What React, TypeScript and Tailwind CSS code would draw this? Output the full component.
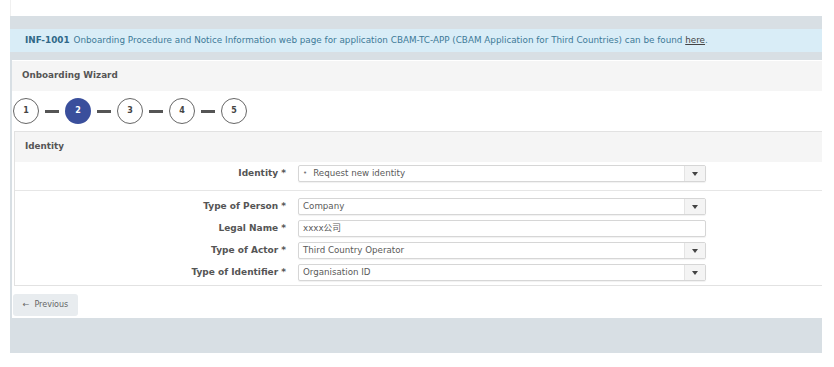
import React from "react";

const steps = [1, 2, 3, 4, 5];

const rows = [
  { label: "Type of Person", value: "Company", select: true },
  { label: "Legal Name", value: "xxxx公司", select: false },
  { label: "Type of Actor", value: "Third Country Operator", select: true },
  { label: "Type of Identifier", value: "Organisation ID", select: true },
];

function Field({ value, select, bullet }: { value: string; select: boolean; bullet?: boolean }) {
  return (
    <div className="w-[408px] h-[17px] flex items-stretch border border-[#d6d6d6] rounded-[2px] bg-white shadow-[0_1px_1px_rgba(0,0,0,0.06)]">
      <div className="flex-1 flex items-center pl-[4px] text-[8.7px] text-[#5a5a5a]">
        {bullet && <span className="mr-[6px] text-[7px] text-[#777]">•</span>}
        <span>{value}</span>
      </div>
      {select && (
        <div className="w-[21px] flex items-center justify-center bg-[#f4f4f4] border-l border-[#e4e4e4]">
          <svg width="6" height="4" viewBox="0 0 6 4">
            <path d="M0 0 L6 0 L3 4 Z" fill="#444" />
          </svg>
        </div>
      )}
    </div>
  );
}

function Row({ label, children }: { label: string; children: React.ReactNode }) {
  return (
    <div className="flex items-center gap-[12px]">
      <div className="w-[271px] text-right text-[9px] font-bold text-[#555]">{label} *</div>
      {children}
    </div>
  );
}

export default function App() {
  return (
    <div className="min-h-screen bg-white font-['DejaVu_Sans','Noto_Sans_CJK_SC',sans-serif]">
      <div className="ml-[10px] w-[812px]">
        <div className="h-4 border-l border-[#f0f0f0]" />
        <div className="bg-[#d8dfe4] pt-[13px] pb-[35px]">
          <div className="h-[23px] bg-[#d9edf7] flex items-center pl-[15px] text-[8.8px] text-[#3d7a98]">
            <span className="font-bold text-[#2f6888] mr-[4px]">INF-1001</span>
            <span>
              Onboarding Procedure and Notice Information web page for application CBAM-TC-APP (CBAM Application for Third Countries) can be found{" "}
              <span className="underline text-[#444]">here</span>.
            </span>
          </div>

          <div className="mt-[8px] ml-[2px] bg-white pt-px pb-[2px]">
            <div className="h-[30px] bg-[#f5f5f5] flex items-center pl-[10px] text-[8.8px] font-bold text-[#555]">
              Onboarding Wizard
            </div>

            <div className="mt-[7px] ml-px flex items-center gap-[6px]">
              {steps.map((s, i) => (
                <React.Fragment key={s}>
                  {i > 0 && <div className="w-[14px] h-[3px] bg-[#555]" />}
                  <div
                    className={
                      s === 2
                        ? "w-[26px] h-[26px] rounded-full bg-[#3a4f9c] text-white flex items-center justify-center text-[8px] font-bold"
                        : "w-[26px] h-[26px] rounded-full border-[1.5px] border-[#666] bg-white text-[#444] flex items-center justify-center text-[8px] font-bold"
                    }
                  >
                    {s}
                  </div>
                </React.Fragment>
              ))}
            </div>

            <div className="mt-[7px] ml-[2px] border-t border-l border-b border-[#e2e2e2] pb-[4px]">
              <div className="h-[30px] bg-[#f5f5f5] flex items-center pl-[10px] text-[8.8px] font-bold text-[#555]">
                Identity
              </div>
              <div className="pt-[3px] pb-[7px] border-b border-[#e6e6e6]">
                <Row label="Identity">
                  <div className="h-[18px] flex">
                    <Field value="Request new identity" select bullet />
                  </div>
                </Row>
              </div>
              <div className="pt-[7px] flex flex-col gap-[5px]">
                {rows.map((r) => (
                  <Row key={r.label} label={r.label}>
                    <Field value={r.value} select={r.select} />
                  </Row>
                ))}
              </div>
            </div>

            <button className="mt-[8px] ml-px w-[65px] h-[22px] rounded-[3px] bg-[#e8ecef] flex items-center justify-center gap-[5px] text-[8px] text-[#666]">
              <span className="text-[8px]">←</span>
              <span>Previous</span>
            </button>
          </div>
        </div>
      </div>
    </div>
  );
}
